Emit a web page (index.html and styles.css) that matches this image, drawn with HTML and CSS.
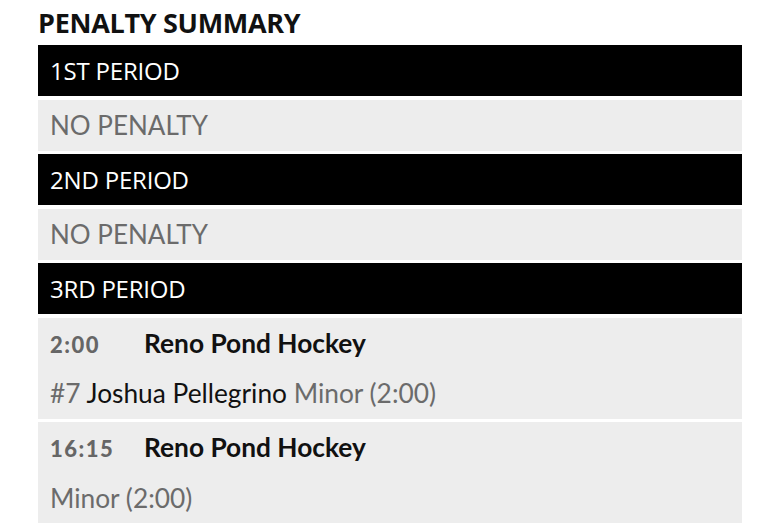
FILE: index.html
```html
<!DOCTYPE html>
<html>
<head>
<meta charset="utf-8">
<link rel="stylesheet" href="styles.css">
</head>
<body>
<div class="summary">
  <h2 class="title">PENALTY SUMMARY</h2>
  <div class="period">1ST PERIOD</div>
  <div class="empty">NO PENALTY</div>
  <div class="period">2ND PERIOD</div>
  <div class="empty">NO PENALTY</div>
  <div class="period">3RD PERIOD</div>
  <div class="penalty">
    <div class="line"><span class="time">2:00</span><span class="team">Reno Pond Hockey</span></div>
    <div class="line"><span class="muted">#7</span> <span class="player">Joshua Pellegrino</span> <span class="muted">Minor (2:00)</span></div>
  </div>
  <div class="penalty">
    <div class="line"><span class="time">16:15</span><span class="team">Reno Pond Hockey</span></div>
    <div class="line"><span class="muted">Minor (2:00)</span></div>
  </div>
</div>
</body>
</html>
```

FILE: styles.css
```css
html, body {
  margin: 0;
  padding: 0;
  background: #fff;
}
body {
  padding: 0 38px;
  font-family: "Lato", "Open Sans", sans-serif;
}
.summary {
  display: flex;
  flex-direction: column;
  gap: 3.5px;
  width: 704px;
}
.title {
  margin: 0;
  height: 41.5px;
  line-height: 46px;
  font-family: "Open Sans", sans-serif;
  font-weight: 700;
  font-size: 27px;
  color: #111;
  letter-spacing: -0.3px;
}
.period, .empty {
  height: 51px;
  line-height: 51px;
  padding-left: 12px;
}
.period {
  background: #000;
  color: #fff;
  font-family: "Open Sans", sans-serif;
  font-size: 24px;
  letter-spacing: -0.2px;
}
.empty {
  background: #ededed;
  color: #6b6b6b;
  font-family: "Lato", sans-serif;
  font-size: 26px;
}
.penalty {
  background: #ededed;
  padding-left: 12px;
}
.line {
  height: 50.5px;
  line-height: 50.5px;
  font-size: 26.3px;
  color: #111;
  white-space: nowrap;
}
.time {
  display: inline-block;
  width: 94px;
  font-weight: 900;
  font-size: 22px;
  letter-spacing: 1.5px;
  color: #666;
}
.team {
  font-weight: 700;
}
.muted {
  color: #6b6b6b;
}
```
